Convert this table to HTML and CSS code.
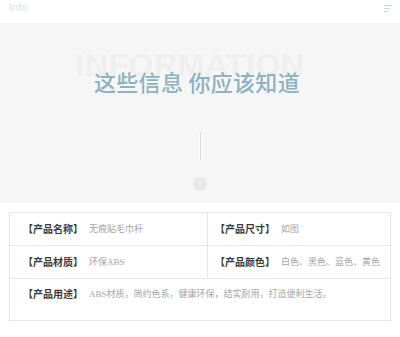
FILE: index.html
```html
<!DOCTYPE html>
<html lang="zh">
<head>
<meta charset="utf-8">
<title>Info</title>
<link rel="stylesheet" href="styles.css">
</head>
<body>
<header class="topbar">
  <span class="brand">Info</span>
  <svg class="menu" width="8" height="7" viewBox="0 0 8 7">
    <rect x="0" y="0" width="8" height="1" fill="#c9d8e0"/>
    <rect x="0" y="3" width="6" height="1" fill="#c9d8e0"/>
    <rect x="0" y="6" width="4" height="1" fill="#c9d8e0"/>
  </svg>
</header>
<section class="hero">
  <div class="titles">
    <div class="ghost">INFORMATION</div>
    <h1 class="title">这些信息 你应该知道</h1>
  </div>
  <div class="vline"></div>
  <div class="dot">
    <svg width="14" height="14" viewBox="0 0 14 14">
      <circle cx="7" cy="7" r="7" fill="#e8e8e8"/>
      <path d="M7 5 V9 M5.8 6.2 L7 5 L8.2 6.2" stroke="#f8f8f8" stroke-width="0.6" fill="none"/>
    </svg>
  </div>
</section>
<section class="spec">
  <div class="cell c-left"><span class="label">【产品名称】</span><span class="value">无痕贴毛巾杆</span></div>
  <div class="cell c-right"><span class="label">【产品尺寸】</span><span class="value">如图</span></div>
  <div class="cell c-left"><span class="label">【产品材质】</span><span class="value">环保ABS</span></div>
  <div class="cell c-right"><span class="label">【产品颜色】</span><span class="value">白色、黑色、蓝色、黄色</span></div>
  <div class="cell c-full"><span class="label">【产品用途】</span><span class="value">ABS材质，简约色系，健康环保，结实耐用，打造便利生活。</span></div>
</section>
</body>
</html>
```
FILE: styles.css
```css
html, body {
  margin: 0;
  padding: 0;
  background: #ffffff;
}
body {
  width: 400px;
  font-family: "Noto Sans CJK SC", "Liberation Sans", sans-serif;
}
.topbar {
  height: 23px;
  box-sizing: border-box;
  padding: 3px 8px 0 9px;
  display: flex;
  justify-content: space-between;
  align-items: flex-start;
}
.brand {
  font-family: "Liberation Sans", sans-serif;
  font-weight: bold;
  font-size: 10px;
  line-height: 10px;
  color: #e4eaee;
}
.menu {
  margin-top: 2px;
  display: block;
}
.hero {
  background: #f6f6f6;
  height: 180px;
  box-sizing: border-box;
  padding-top: 26px;
  display: flex;
  flex-direction: column;
  align-items: center;
}
.titles {
  display: grid;
  justify-items: center;
  margin-right: 20px;
}
.ghost, .title {
  grid-area: 1 / 1;
}
.ghost {
  font-family: "Liberation Sans", sans-serif;
  font-weight: bold;
  font-size: 32px;
  line-height: 32px;
  color: #efefef;
  letter-spacing: 0.5px;
}
.title {
  margin: 21px 0 0 14px;
  font-size: 22px;
  line-height: 22px;
  font-weight: 500;
  color: #8db2c1;
  letter-spacing: 0.3px;
}
.vline {
  margin-top: 40px;
  width: 1px;
  height: 28px;
  background: #dcdcdc;
  box-shadow: 1px 0 0 #fcfcfc, -1px 0 0 #fcfcfc;
}
.dot {
  margin-top: 17px;
  width: 14px;
  height: 14px;
}
.dot svg {
  display: block;
}
.spec {
  margin: 9px 9px 0 9px;
  border: 1px solid #e6e6e6;
  border-bottom: none;
  display: grid;
  grid-template-columns: 198px 1fr;
}
.cell {
  display: flex;
  align-items: center;
  border-bottom: 1px solid #e6e6e6;
  height: 33px;
  box-sizing: border-box;
  white-space: nowrap;
}
.c-left {
  border-right: 1px solid #e6e6e6;
  padding-left: 13px;
}
.c-right {
  padding-left: 7px;
}
.c-full {
  grid-column: 1 / 3;
  height: 42px;
  align-items: flex-start;
  padding: 10px 0 0 13px;
}
.label {
  font-size: 10px;
  line-height: 10px;
  font-weight: bold;
  color: #3a3a3a;
  margin-right: 6px;
}
.value {
  font-family: "Liberation Serif", "Noto Sans CJK SC", serif;
  font-size: 9px;
  line-height: 10px;
  color: #a6a6a6;
}
```
